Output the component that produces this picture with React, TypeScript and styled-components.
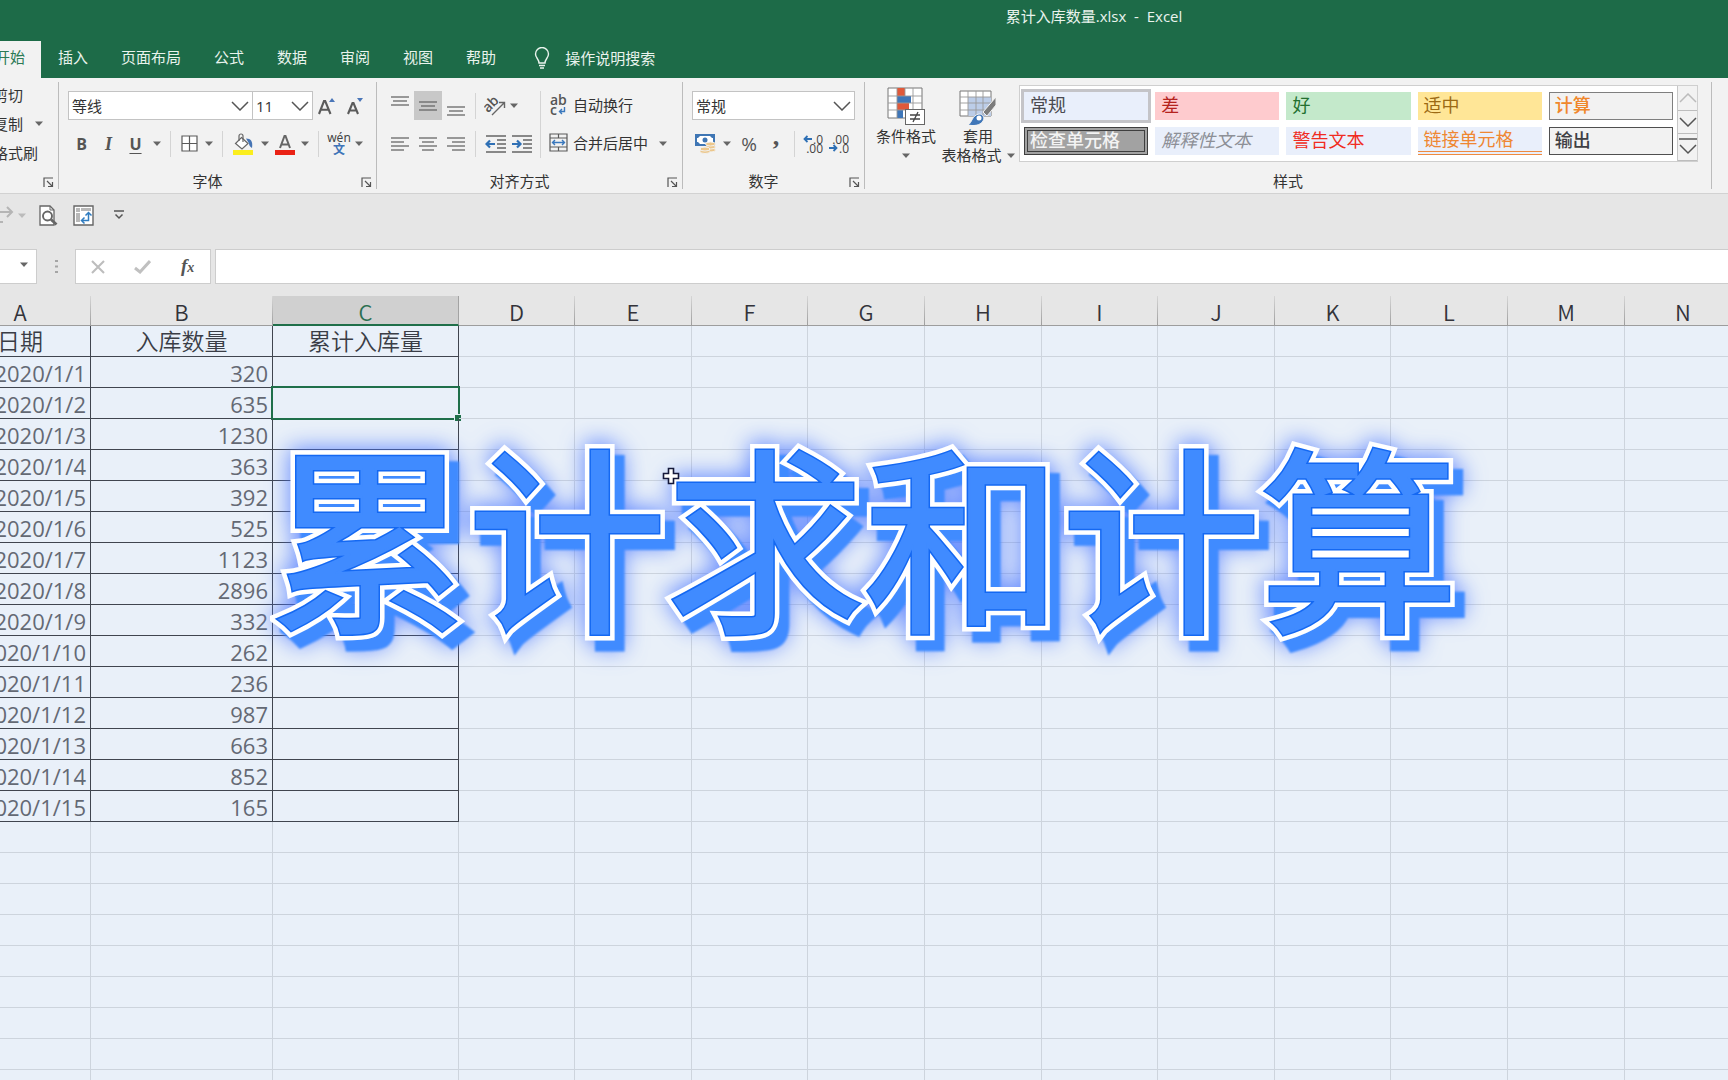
import React from "react";
import styled, { createGlobalStyle, css } from "styled-components";

const UI_FONT = `"Open Sans", "Noto Sans CJK SC", "Noto Sans", sans-serif`;

const GlobalStyle = createGlobalStyle`
  *, *::before, *::after { box-sizing: border-box; }
  html, body { margin: 0; padding: 0; }
  body { font-family: ${UI_FONT}; background: #e6e6e6; }
  button, input, select { font: inherit; color: inherit; margin: 0; }
`;

const Page = styled.div`
  position: relative;
  display: flex;
  flex-direction: column;
  height: 100vh;
  overflow: hidden;
  font-size: 15px;
  line-height: 20px;
  color: #333;
`;

/* ---------- title bar and tabs ---------- */

const TitleBar = styled.header`
  background: #1d6b48;
  color: #e9f3ed;
  padding: 6px 0 15px 460px;
  text-align: center;
  white-space: pre;
`;

const TabBar = styled.nav`
  display: flex;
  gap: 1px;
  height: 37px;
  padding-right: 16px;
  background: #1d6b48;
  color: #e9f3ed;
`;

const Tab = styled.button<{ $active?: boolean }>`
  flex: none;
  padding: 0 16px 6px;
  border: 0;
  background: ${(p) => (p.$active ? "#f2f2f2" : "transparent")};
  color: ${(p) => (p.$active ? "#2c7a55" : "inherit")};
  ${(p) => p.$active && "margin-left: -21px;"}
`;

const TellMe = styled.button`
  display: flex;
  align-items: center;
  gap: 15px;
  padding: 0 16px 4px 21px;
  border: 0;
  background: transparent;
`;

/* ---------- ribbon ---------- */

const Ribbon = styled.section`
  display: flex;
  flex: none;
  height: 116px;
  padding: 4px 16px 4px 0;
  background: #f2f2f2;
  border-bottom: 1px solid #d2d2d2;
`;

const Group = styled.div<{ $width?: number }>`
  display: flex;
  flex-direction: column;
  ${(p) => (p.$width ? `flex: none; width: ${p.$width}px;` : "flex: 1; min-width: 0;")}
  border-right: 1px solid #bcbcbc;
  overflow: hidden;
`;

const GroupBody = styled.div`
  display: flex;
  flex: 1;
  padding: 9px 0 0 9px;
`;

const Rows = styled.div`
  display: flex;
  flex-direction: column;
  gap: 9px;
`;

const Row = styled.div`
  display: flex;
  align-items: center;
  height: 29px;
`;

const GroupFooter = styled.div`
  display: flex;
  align-items: center;
  height: 20px;
  margin-bottom: -2px;
`;

const GroupName = styled.span`
  flex: 1;
  text-align: center;
`;

const Launcher = styled.button`
  display: flex;
  width: 15px;
  margin-left: 5px;
  padding: 2px 0 0;
  border: 0;
  background: transparent;
`;

const ClipList = styled.div`
  flex: 1;
  margin: -2px 0 0 -7px;
`;

const ClipItem = styled.button`
  display: flex;
  align-items: center;
  gap: 12px;
  height: 29px;
  padding: 0;
  border: 0;
  background: transparent;
  white-space: nowrap;
`;

const IconButton = styled.button<{ $w?: number; $on?: boolean }>`
  display: flex;
  flex: none;
  align-items: center;
  justify-content: center;
  width: ${(p) => p.$w ?? 27}px;
  height: 29px;
  padding: 0;
  border: 0;
  background: ${(p) => (p.$on ? "#c8c8c8" : "transparent")};
`;

const TextButton = styled.button`
  display: flex;
  align-items: center;
  height: 29px;
  padding: 0 0 2px;
  border: 0;
  background: transparent;
  white-space: nowrap;
`;

const IconSlot = styled.span`
  display: flex;
  width: 24px;
`;

const Divider = styled.span<{ $tall?: boolean }>`
  flex: none;
  width: 1px;
  height: ${(p) => (p.$tall ? 67 : 26)}px;
  margin: 0 ${(p) => (p.$tall ? 8 : 6)}px 0 5px;
  background: #d4d4d4;
`;

const Glyph = styled.span<{ $kind: "bold" | "italic" | "underline" | "percent" | "comma" }>`
  color: #555;
  font: 700 16px/20px "Open Sans", sans-serif;
  ${(p) => p.$kind === "italic" && css`font-family: "Liberation Serif", serif; font-style: italic; font-size: 18px;`}
  ${(p) => p.$kind === "underline" && css`text-decoration: underline; text-underline-offset: 3px;`}
  ${(p) => p.$kind === "percent" && css`font-weight: 500; font-size: 19px;`}
  ${(p) => p.$kind === "comma" && css`font: 700 26px/20px "Liberation Serif", serif; height: 34px;`}
`;

const Combo = styled.label<{ $width: number }>`
  position: relative;
  display: block;
  width: ${(p) => p.$width}px;
  height: 29px;
  margin-right: -1px;

  select {
    appearance: none;
    width: 100%;
    height: 100%;
    padding: 0 26px 0 3px;
    border: 1px solid #c3c3c3;
    border-radius: 0;
    background: #fff;
    line-height: 20px;
  }

  svg {
    position: absolute;
    right: 4px;
    top: 10px;
    pointer-events: none;
  }
`;

const BigButton = styled.button<{ $w: number }>`
  display: flex;
  flex: none;
  flex-direction: column;
  align-items: center;
  width: ${(p) => p.$w}px;
  padding: 0;
  border: 0;
  background: transparent;
  line-height: 19px;

  svg { flex: none; }
  > svg { margin: 2px 0; }
`;

const BigLabel = styled.span`
  display: flex;
  align-items: center;
  gap: 5px;
  height: 19px;
  white-space: nowrap;
`;

const StylesBody = styled.div`
  display: flex;
  flex: 1;
  padding: 3px 13px 0 10px;
`;

const Gallery = styled.div`
  display: flex;
  flex: 1;
  height: 77px;
  border: 1px solid #cfcfcf;
  background: #fff;
`;

const Swatches = styled.div`
  display: grid;
  flex: 1;
  grid-template-columns: repeat(5, 1fr);
  grid-auto-rows: 28px;
  gap: 7px;
  padding: 6px 4px 6px 4px;
`;

const Swatch = styled.button<{ $kind: string }>`
  min-width: 0;
  padding: 0 6px 3px;
  border: 0;
  background: #e9effb;
  color: #4a4a50;
  font-size: 18px;
  line-height: 24px;
  text-align: left;
  white-space: nowrap;
  ${(p) => p.$kind === "normal" && css`outline: 3px solid #c4c4c8;`}
  ${(p) => p.$kind === "bad" && css`background: #fecbce; color: #b5231e;`}
  ${(p) => p.$kind === "good" && css`background: #c4e9cb; color: #23702f;`}
  ${(p) => p.$kind === "neutral" && css`background: #ffe697; color: #9c6a14;`}
  ${(p) => p.$kind === "calc" && css`background: #f2f2f2; color: #f0872b; border: 1px solid #7f7f7f; padding: 0 5px 2px; font-weight: 500;`}
  ${(p) => p.$kind === "check" && css`background: #a2a2a2; color: #f3f3f3; border: 4px double #3f3f3f; padding: 0 2px 3px; font-weight: 500; line-height: 18px;`}
  ${(p) => p.$kind === "explain" && css`color: #8d9097; font-style: italic;`}
  ${(p) => p.$kind === "warn" && css`color: #f02b22;`}
  ${(p) => p.$kind === "link" && css`color: #ef8732; border-bottom: 4px double #ef8b40; padding-bottom: 0;`}
  ${(p) => p.$kind === "output" && css`background: #f2f2f2; color: #3f3f44; border: 1px solid #4f4f4f; padding: 0 5px 2px; font-weight: 500;`}
`;

const Scroller = styled.div`
  display: grid;
  grid-template-rows: 25px 23px 1fr;
  width: 20px;
  border-left: 1px solid #c6c6c6;
  background: #f2f2f2;
`;

const ScrollButton = styled.button`
  display: flex;
  align-items: center;
  justify-content: center;
  padding: 0;
  border: 0;
  border-bottom: 1px solid #bdbdbd;
  background: transparent;
`;

/* ---------- quick access and formula bar ---------- */

const QuickBar = styled.div`
  display: flex;
  flex: none;
  align-items: center;
  height: 55px;
  padding-bottom: 13px;
`;

const FormulaBar = styled.div`
  display: flex;
  flex: none;
  align-items: stretch;
  height: 35px;
  margin-bottom: 12px;
`;

const NameBox = styled.button`
  display: flex;
  align-items: center;
  justify-content: flex-end;
  width: 37px;
  padding: 0 8px 4px 0;
  border: 1px solid #cdcdcd;
  border-left: 0;
  background: #fff;
`;

const Grip = styled.span`
  display: flex;
  align-items: center;
  justify-content: center;
  width: 38px;
`;

const FormulaTools = styled.div`
  display: flex;
  align-items: center;
  justify-content: space-around;
  width: 136px;
  margin-right: 4px;
  border: 1px solid #cdcdcd;
  background: #fff;
`;

const Fx = styled.span`
  color: #555;
  font: italic 700 19px/20px "Liberation Serif", serif;
  small { font-size: 14px; }
`;

const FormulaInput = styled.input`
  flex: 1;
  min-width: 0;
  border: 1px solid #cdcdcd;
  border-right: 0;
  border-radius: 0;
  background: #fff;
  outline: 0;
`;

/* ---------- sheet ---------- */

const Sheet = styled.main`
  flex: 1;
  min-height: 0;
  overflow: hidden;
  background: #e9f0f9;
`;

const Grid = styled.table`
  width: max(1792px, calc(100% + 50px));
  margin-left: -50px;
  border-spacing: 0;
  table-layout: fixed;
  font-size: 22px;
  line-height: 28px;
`;

const HeadCell = styled.th<{ $on?: boolean }>`
  height: 30px;
  padding: 2px 0 1px;
  border-right: 1px solid;
  border-image: linear-gradient(#d8d8d8, #9c9c9c) 1;
  border-bottom: 1px solid #a3a7ad;
  background: #e6e6e6;
  color: #33333a;
  font-family: "Noto Sans CJK SC", sans-serif;
  font-weight: 350;
  line-height: 26px;
  ${(p) =>
    p.$on &&
    css`
      padding-bottom: 0;
      background: #d0d0d0;
      color: #2b6f50;
      border-image: none;
      border-right-color: #a3a3a3;
      border-bottom: 2px solid #1f6f4a;
    `}
`;

const Cell = styled.td<{ $framed?: boolean; $head?: boolean }>`
  position: relative;
  height: 31px;
  padding: ${(p) => (p.$head ? "0 0 1px" : "2px 4px 0 0")};
  border-right: 1px solid ${(p) => (p.$framed ? "#40454f" : "#cdd4dd")};
  border-bottom: 1px solid ${(p) => (p.$framed ? "#40454f" : "#cdd4dd")};
  color: ${(p) => (p.$head ? "#3a3d46" : "#646974")};
  font-size: ${(p) => (p.$head ? 23 : 22)}px;
  font-weight: ${(p) => (p.$head ? 350 : 400)};
  text-align: ${(p) => (p.$head ? "center" : "right")};
  white-space: nowrap;
`;

const Selection = styled.span`
  position: absolute;
  inset: -2px;
  border: 2px solid #1f6f4a;

  &::after {
    content: "";
    position: absolute;
    right: -4px;
    bottom: -4px;
    width: 8px;
    height: 8px;
    border: 1px solid #e9f0f9;
    background: #1f6f4a;
  }
`;

/* ---------- caption over the sheet ---------- */

const CaptionLayer = styled.div`
  position: absolute;
  inset: 0;
  display: flex;
  align-items: center;
  justify-content: center;
  padding-bottom: 19px;
  pointer-events: none;
`;

const Caption = styled.h1`
  position: relative;
  z-index: 0;
  margin: 0;
  color: #408bff;
  font-family: "Noto Sans CJK SC", sans-serif;
  font-size: 198px;
  font-weight: 400;
  line-height: 240px;
  white-space: nowrap;
  -webkit-text-stroke: 5px #1468f2;

  &::before,
  &::after {
    content: attr(data-text);
    position: absolute;
    inset: 0;
  }

  &::before {
    z-index: -1;
    color: #fff;
    -webkit-text-stroke: 14px #fff;
    filter: drop-shadow(10px 11px 1px #408bff) drop-shadow(-1px -2px 11px rgba(70, 115, 255, 0.8));
  }

  &::after {
    -webkit-text-stroke: 2px #408bff;
  }
`;

const Pointer = styled.svg`
  position: absolute;
  left: 662px;
  top: 467px;
`;

/* ---------- icons ---------- */

const Caret = ({ color = "#666" }: { color?: string }) => (
  <svg width="8" height="5" viewBox="0 0 8 5"><path d="M0 0.5h8L4 5z" fill={color} /></svg>
);

const Chevron = ({ up, color = "#555" }: { up?: boolean; color?: string }) => (
  <svg width="18" height="10" viewBox="0 0 18 10" fill="none" stroke={color} strokeWidth="1.5">
    <path d={up ? "M1 9l8-8 8 8" : "M1 1l8 8 8-8"} />
  </svg>
);

const LauncherIcon = () => (
  <svg width="11" height="11" viewBox="0 0 11 11" fill="none" stroke="#555" strokeWidth="1.2">
    <path d="M1 10V1h9M4 4l5 5M9.5 5v4.5H5" />
  </svg>
);

const Bulb = () => (
  <svg width="16" height="22" viewBox="0 0 16 22" fill="none" stroke="#e9f3ed" strokeWidth="1.4">
    <path d="M5 16c0-4-3.5-5-3.5-9a6.5 6.5 0 0 1 13 0c0 4-3.5 5-3.5 9zM5 18.5h6M6 21h4" />
  </svg>
);

const Lines = ({ rows }: { rows: [number, number, number][] }) => (
  <svg width="18" height="22" viewBox="0 0 18 22" stroke="#666" strokeWidth="1.3">
    {rows.map(([x1, x2, y], i) => <path key={i} d={`M${x1} ${y}H${x2}`} />)}
  </svg>
);

const GrowFont = ({ down }: { down?: boolean }) => (
  <svg width="20" height="22" viewBox="0 0 20 22">
    <path
      d={down ? "M3 19L7.5 8h1L13 19M4.8 15.5h6.4" : "M2 19L7 6h1.2L13.5 19M4 14.8h7.6"}
      fill="none" stroke="#5b5b5b" strokeWidth="2.1"
    />
    <path d={down ? "M12 3h6l-3 4z" : "M12 7h6l-3-4z"} fill="#4a76b8" />
  </svg>
);

const BordersIcon = () => (
  <svg width="17" height="17" viewBox="0 0 17 17" fill="#fff" stroke="#5a5a5a" strokeWidth="1.2">
    <path d="M1 1h15v15H1zM8.5 1v15M1 8.5h15" />
  </svg>
);

const FillIcon = () => (
  <svg width="22" height="22" viewBox="0 0 22 22">
    <path d="M9.5 4.5l6.500 6-6 5.500-6.500-5.500z" fill="#fff" stroke="#666" strokeWidth="1.2" />
    <path d="M7 8V3a2 2 0 0 1 4 0v6" fill="none" stroke="#666" strokeWidth="1.2" />
    <path d="M14 5.5c5 0 7 3 6 9.5-2-1-3-3-3-4.500z" fill="#4574b4" />
    <rect x="1" y="17" width="20" height="5" fill="#fbee1e" />
  </svg>
);

const FontColorIcon = () => (
  <svg width="22" height="22" viewBox="0 0 22 22">
    <path d="M6 15L10.5 3h1L16 15M7.5 11.5h7" fill="none" stroke="#666" strokeWidth="2" />
    <rect x="1" y="17" width="20" height="5" fill="#ea2215" />
  </svg>
);

const PhoneticStack = styled.span`
  display: flex;
  flex-direction: column;
  align-items: center;
  color: #444;
  font: 400 12px/10px "Noto Sans", sans-serif;
  b { color: #3f74b8; font: 700 12px/11px "Noto Sans CJK SC", sans-serif; }
`;

const OrientIcon = () => (
  <svg width="22" height="22" viewBox="0 0 22 22">
    <text x="0" y="15" transform="rotate(-45 6 12)" fontSize="14" fontWeight="600" fontFamily="Open Sans" fill="#555">ab</text>
    <path d="M8 20L20 8M15 7.5h5.5V13" fill="none" stroke="#666" strokeWidth="1.4" />
  </svg>
);

const IndentIcon = ({ right }: { right?: boolean }) => (
  <svg width="21" height="20" viewBox="0 0 21 20" fill="none">
    <path d="M1 2h20M12 6h9M12 10h9M12 14h9M1 18h20" stroke="#666" strokeWidth="1.3" />
    <path d={right ? "M1 10h8M6 6.5L9.5 10 6 13.5" : "M10 10H2M5 6.5L1.5 10 5 13.5"} stroke="#2f70b5" strokeWidth="2.2" />
  </svg>
);

const WrapMark = styled.span`
  display: flex;
  flex-direction: column;
  width: 20px;
  padding-left: 1px;
  color: #555;
  font: 600 14px/10px "Open Sans", sans-serif;
  text-align: left;

  span { display: flex; gap: 1px; }
  svg { margin-top: 2px; }
`;

const WrapIcon = () => (
  <WrapMark>
    <span>ab</span>
    <span>
      c
      <svg width="8" height="8" viewBox="0 0 8 8" fill="none" stroke="#3a78bd" strokeWidth="1.4">
        <path d="M6.5 0v4.5H1.5M4 2L1.5 4.5 4 7" />
      </svg>
    </span>
  </WrapMark>
);

const MergeIcon = () => (
  <svg width="19" height="19" viewBox="0 0 19 19" fill="none" stroke="#5a5a5a" strokeWidth="1.2">
    <path d="M1 1h17v17H1zM1 5h17M1 14h17M9.5 1v4M9.5 14v4" />
    <path d="M3.5 9.5h12M6 7L3.5 9.5 6 12M13 7l2.5 2.5L13 12" stroke="#3a78bd" strokeWidth="1.4" />
  </svg>
);

const CurrencyIcon = () => (
  <svg width="21" height="21" viewBox="0 0 21 21">
    <rect x="1" y="2" width="18" height="10" fill="#fff" stroke="#3f76b4" strokeWidth="2" />
    <path d="M1 1h4v2L3 5H1zM15 1h4v4h-2l-2-2zM1 9h2l2 2v2H1z" fill="#3f76b4" />
    <circle cx="10" cy="7" r="2.5" fill="#3f76b4" />
    <g fill="#ecc78c" stroke="#f2f2f2">
      <ellipse cx="15.5" cy="17" rx="5" ry="2" />
      <ellipse cx="15.5" cy="14" rx="5" ry="2" />
      <ellipse cx="15.5" cy="11" rx="5" ry="2" />
      <ellipse cx="10" cy="18.5" rx="5" ry="2" />
      <ellipse cx="10" cy="16" rx="5" ry="2" />
    </g>
  </svg>
);

const DecimalMark = styled.span`
  display: flex;
  flex-direction: column;
  width: 20px;
  color: #444;
  font: 400 12px/9px "Open Sans", sans-serif;

  span { display: flex; align-items: center; justify-content: flex-end; gap: 1px; height: 9px; }
`;

const DecimalIcon = ({ less }: { less?: boolean }) => {
  const arrow = (
    <svg width="9" height="8" viewBox="0 0 9 8" fill="none" stroke="#2f70b5" strokeWidth="1.8">
      <path d={less ? "M0 4h7M4.5 1l3 3-3 3" : "M9 4H2M4.5 1l-3 3 3 3"} />
    </svg>
  );
  return (
    <DecimalMark>
      <span>{!less && arrow}{less ? ".00" : ".0"}</span>
      <span>{less && arrow}{less ? ".0" : ".00"}</span>
    </DecimalMark>
  );
};

const ConditionalIcon = () => (
  <svg width="38" height="38" viewBox="0 0 38 38">
    <path d="M1 1h34v30H1z" fill="#fff" stroke="#777" />
    <rect x="10" y="1" width="8" height="8" fill="#e0593a" />
    <rect x="10" y="9" width="14" height="7" fill="#3f76b8" />
    <rect x="10" y="16" width="12" height="7" fill="#e0593a" />
    <rect x="10" y="23" width="6" height="8" fill="#3f76b8" />
    <path d="M10 1v30M18 1v8M26 1v22M1 9h34M1 16h34M1 23h34" fill="none" stroke="#999" strokeWidth="0.9" />
    <rect x="18.5" y="22.5" width="19" height="15" fill="#fff" stroke="#666" />
    <path d="M23 28h10M23 32h10M31 25l-5 10" stroke="#444" strokeWidth="1.3" />
  </svg>
);

const TableFormatIcon = () => (
  <svg width="38" height="38" viewBox="0 0 38 38">
    <path d="M1 4h31v25H1z" fill="#fff" stroke="#777" />
    <rect x="9" y="10" width="23" height="19" fill="#bccde8" />
    <path d="M9 4v25M17 4v25M24 4v25M1 10h31M1 16h31M1 23h31" stroke="#999" strokeWidth="0.9" />
    <path d="M37 10v8L28 29l-4-4z" fill="#7c7c7c" stroke="#f2f2f2" />
    <path d="M9 38c4-2 4-10 11-11 4 0 6 4 4 7-3 5-10 5-15 4z" fill="#3f76b8" stroke="#f2f2f2" />
    <circle cx="20" cy="31" r="2.5" fill="#fff" />
  </svg>
);

const RedoIcon = () => (
  <svg width="14" height="18" viewBox="0 0 14 18" fill="none" stroke="#b5b5b5" strokeWidth="2">
    <path d="M0 6h12M7 1l5 5-5 5M0 16h3" />
  </svg>
);

const PreviewIcon = () => (
  <svg width="19" height="21" viewBox="0 0 19 21" fill="none" stroke="#666">
    <path d="M1 1h10l4 4v15H1z" fill="#fff" strokeWidth="1.3" />
    <path d="M11 1v4h4" />
    <circle cx="8.5" cy="11" r="4.5" fill="#fff" strokeWidth="1.9" />
    <path d="M12 14.5l5.5 5" strokeWidth="2.8" />
  </svg>
);

const PivotIcon = () => (
  <svg width="21" height="21" viewBox="0 0 21 21" fill="none">
    <path d="M1 1h19v19H1z" fill="#fff" stroke="#666" strokeWidth="1.4" />
    <path d="M3 3h4v4H3zM8 3h10v3H8zM3 8h4v9H3z" fill="#b8b8b8" />
    <path d="M9 15.5h6.5V8M11.5 12.5l-3 3 3 3M12.5 10.5l3-3 3 3" stroke="#2f7cc0" strokeWidth="1.5" />
  </svg>
);

const CustomizeIcon = () => (
  <svg width="10" height="10" viewBox="0 0 10 10" fill="none" stroke="#555" strokeWidth="1.5">
    <path d="M0 1h10M1.5 4.5L5 8l3.5-3.5" />
  </svg>
);

const GripIcon = () => (
  <svg width="3" height="14" viewBox="0 0 3 14" fill="#a5a5a5">
    <path d="M0 0h3v2H0zM0 5.5h3v2H0zM0 11h3v2H0z" />
  </svg>
);

const CancelIcon = () => (
  <svg width="14" height="14" viewBox="0 0 14 14" stroke="#bdbdbd" strokeWidth="2.1"><path d="M1 1l12 12M13 1L1 13" /></svg>
);

const EnterIcon = () => (
  <svg width="17" height="14" viewBox="0 0 17 14" fill="none" stroke="#c0c0c0" strokeWidth="3"><path d="M1 8l5 4L16 1" /></svg>
);

/* ---------- data ---------- */

const tabs = ["开始", "插入", "页面布局", "公式", "数据", "审阅", "视图", "帮助"];

const swatches: [string, string][] = [
  ["常规", "normal"], ["差", "bad"], ["好", "good"], ["适中", "neutral"], ["计算", "calc"],
  ["检查单元格", "check"], ["解释性文本", "explain"], ["警告文本", "warn"], ["链接单元格", "link"], ["输出", "output"],
];

const columns: [string, number | undefined][] = [
  ["A", 141], ["B", 182], ["C", 186], ["D", 116], ["E", 117], ["F", 116], ["G", 117], ["H", 117],
  ["I", 116], ["J", 117], ["K", 116], ["L", 117], ["M", 117], ["N", undefined],
];

const spareColumns = columns.slice(3).map(([name]) => name);

const quantities = [320, 635, 1230, 363, 392, 525, 1123, 2896, 332, 262, 236, 987, 663, 852, 165];
const emptyRows = 9;
const caption = "累计求和计算";

export default function App() {
  return (
    <Page>
      <GlobalStyle />
      <TitleBar>累计入库数量.xlsx{"  -  "}Excel</TitleBar>
      <TabBar>
        {tabs.map((t, i) => <Tab key={t} $active={i === 0}>{t}</Tab>)}
        <TellMe><Bulb />操作说明搜索</TellMe>
      </TabBar>

      <Ribbon>
        <Group $width={59}>
          <ClipList>
            <ClipItem>剪切</ClipItem>
            <ClipItem>复制<Caret /></ClipItem>
            <ClipItem>格式刷</ClipItem>
          </ClipList>
          <GroupFooter>
            <GroupName />
            <Launcher aria-label="剪贴板"><LauncherIcon /></Launcher>
          </GroupFooter>
        </Group>

        <Group $width={318}>
          <GroupBody>
            <Rows>
              <Row>
                <Combo $width={185}>
                  <select aria-label="字体"><option>等线</option></select>
                  <Chevron />
                </Combo>
                <Combo $width={61}>
                  <select aria-label="字号"><option>11</option></select>
                  <Chevron />
                </Combo>
                <IconButton $w={29} aria-label="增大字号"><GrowFont /></IconButton>
                <IconButton $w={27} aria-label="减小字号"><GrowFont down /></IconButton>
              </Row>
              <Row>
                <IconButton><Glyph $kind="bold">B</Glyph></IconButton>
                <IconButton><Glyph $kind="italic">I</Glyph></IconButton>
                <IconButton><Glyph $kind="underline">U</Glyph></IconButton>
                <IconButton $w={16} aria-label="下划线"><Caret /></IconButton>
                <Divider />
                <IconButton $w={24} aria-label="边框"><BordersIcon /></IconButton>
                <IconButton $w={16} aria-label="边框选项"><Caret /></IconButton>
                <Divider />
                <IconButton $w={28} aria-label="填充颜色"><FillIcon /></IconButton>
                <IconButton $w={16} aria-label="填充选项"><Caret /></IconButton>
                <IconButton $w={24} aria-label="字体颜色"><FontColorIcon /></IconButton>
                <IconButton $w={16} aria-label="颜色选项"><Caret /></IconButton>
                <Divider />
                <IconButton $w={28}><PhoneticStack>wén<b>文</b></PhoneticStack></IconButton>
                <IconButton $w={12} aria-label="拼音选项"><Caret /></IconButton>
              </Row>
            </Rows>
          </GroupBody>
          <GroupFooter>
            <GroupName>字体</GroupName>
            <Launcher aria-label="字体设置"><LauncherIcon /></Launcher>
          </GroupFooter>
        </Group>

        <Group $width={306}>
          <GroupBody>
            <Rows>
              <Row>
                <IconButton $w={28} aria-label="顶端对齐"><Lines rows={[[0, 18, 2], [2, 16, 6], [0, 18, 10]]} /></IconButton>
                <IconButton $w={28} $on aria-label="垂直居中"><Lines rows={[[0, 18, 7], [2, 16, 11], [0, 18, 15]]} /></IconButton>
                <IconButton $w={28} aria-label="底端对齐"><Lines rows={[[0, 18, 12], [2, 16, 16], [0, 18, 20]]} /></IconButton>
                <Divider />
                <IconButton $w={26} aria-label="方向"><OrientIcon /></IconButton>
                <IconButton $w={12} aria-label="方向选项"><Caret /></IconButton>
              </Row>
              <Row>
                <IconButton $w={28} aria-label="左对齐"><Lines rows={[[0, 18, 5], [0, 13, 9], [0, 18, 13], [0, 13, 17]]} /></IconButton>
                <IconButton $w={28} aria-label="居中"><Lines rows={[[0, 18, 5], [3, 15, 9], [0, 18, 13], [3, 15, 17]]} /></IconButton>
                <IconButton $w={28} aria-label="右对齐"><Lines rows={[[0, 18, 5], [5, 18, 9], [0, 18, 13], [5, 18, 17]]} /></IconButton>
                <Divider />
                <IconButton $w={26} aria-label="减少缩进"><IndentIcon /></IconButton>
                <IconButton aria-label="增加缩进"><IndentIcon right /></IconButton>
              </Row>
            </Rows>
            <Divider $tall />
            <Rows>
              <Row><TextButton><IconSlot><WrapIcon /></IconSlot>自动换行</TextButton></Row>
              <Row>
                <TextButton><IconSlot><MergeIcon /></IconSlot>合并后居中</TextButton>
                <IconButton $w={29} aria-label="合并选项"><Caret /></IconButton>
              </Row>
            </Rows>
          </GroupBody>
          <GroupFooter>
            <GroupName>对齐方式</GroupName>
            <Launcher aria-label="对齐设置"><LauncherIcon /></Launcher>
          </GroupFooter>
        </Group>

        <Group $width={182}>
          <GroupBody>
            <Rows>
              <Row>
                <Combo $width={163}>
                  <select aria-label="数字格式"><option>常规</option></select>
                  <Chevron />
                </Combo>
              </Row>
              <Row>
                <IconButton aria-label="会计数字格式"><CurrencyIcon /></IconButton>
                <IconButton $w={16} aria-label="货币选项"><Caret /></IconButton>
                <IconButton $w={28}><Glyph $kind="percent">%</Glyph></IconButton>
                <IconButton $w={26}><Glyph $kind="comma">,</Glyph></IconButton>
                <Divider />
                <IconButton $w={24} aria-label="增加小数位数"><DecimalIcon /></IconButton>
                <IconButton $w={28} aria-label="减少小数位数"><DecimalIcon less /></IconButton>
              </Row>
            </Rows>
          </GroupBody>
          <GroupFooter>
            <GroupName>数字</GroupName>
            <Launcher aria-label="数字设置"><LauncherIcon /></Launcher>
          </GroupFooter>
        </Group>

        <Group>
          <StylesBody>
            <BigButton $w={62}>
              <ConditionalIcon />
              <BigLabel>条件格式</BigLabel>
              <BigLabel><Caret /></BigLabel>
            </BigButton>
            <BigButton $w={82}>
              <TableFormatIcon />
              <BigLabel>套用</BigLabel>
              <BigLabel>表格格式<Caret /></BigLabel>
            </BigButton>
            <Gallery>
              <Swatches>
                {swatches.map(([label, kind]) => <Swatch key={kind} $kind={kind}>{label}</Swatch>)}
              </Swatches>
              <Scroller>
                <ScrollButton aria-label="上一行"><Chevron up color="#bbb" /></ScrollButton>
                <ScrollButton aria-label="下一行"><Chevron /></ScrollButton>
                <ScrollButton aria-label="其他">
                  <svg width="18" height="18" viewBox="0 0 18 18" fill="none" stroke="#555" strokeWidth="1.5">
                    <path d="M0 1h18M1 7l8 8 8-8" />
                  </svg>
                </ScrollButton>
              </Scroller>
            </Gallery>
          </StylesBody>
          <GroupFooter><GroupName>样式</GroupName></GroupFooter>
        </Group>
      </Ribbon>

      <QuickBar>
        <IconButton $w={14} aria-label="恢复"><RedoIcon /></IconButton>
        <IconButton $w={16} aria-label="恢复选项"><Caret color="#bbb" /></IconButton>
        <IconButton $w={36} aria-label="打印预览"><PreviewIcon /></IconButton>
        <IconButton $w={34} aria-label="数据透视表"><PivotIcon /></IconButton>
        <IconButton $w={38} aria-label="自定义快速访问工具栏"><CustomizeIcon /></IconButton>
      </QuickBar>

      <FormulaBar>
        <NameBox aria-label="名称框"><Caret /></NameBox>
        <Grip><GripIcon /></Grip>
        <FormulaTools>
          <IconButton $w={40} aria-label="取消"><CancelIcon /></IconButton>
          <IconButton $w={40} aria-label="输入"><EnterIcon /></IconButton>
          <IconButton $w={40}><Fx>f<small>x</small></Fx></IconButton>
        </FormulaTools>
        <FormulaInput aria-label="编辑栏" />
      </FormulaBar>

      <Sheet>
        <Grid>
          <colgroup>
            {columns.map(([name, w]) => <col key={name} width={w} />)}
          </colgroup>
          <thead>
            <tr>{columns.map(([name]) => <HeadCell key={name} $on={name === "C"}>{name}</HeadCell>)}</tr>
          </thead>
          <tbody>
            <tr>
              <Cell $framed $head>日期</Cell>
              <Cell $framed $head>入库数量</Cell>
              <Cell $framed $head>累计入库量</Cell>
              {spareColumns.map((c) => <Cell key={c} />)}
            </tr>
            {quantities.map((q, i) => (
              <tr key={i}>
                <Cell $framed>{`2020/1/${i + 1}`}</Cell>
                <Cell $framed>{q}</Cell>
                <Cell $framed>{i === 1 && <Selection />}</Cell>
                {spareColumns.map((c) => <Cell key={c} />)}
              </tr>
            ))}
            {Array.from({ length: emptyRows }, (_, i) => (
              <tr key={i}>{columns.map(([name]) => <Cell key={name} />)}</tr>
            ))}
          </tbody>
        </Grid>
      </Sheet>

      <CaptionLayer>
        <Caption data-text={caption}>{caption}</Caption>
      </CaptionLayer>
      <Pointer width="19" height="19" viewBox="0 0 19 19">
        <path d="M6.5 1.5h5v5h5v5h-5v5h-5v-5h-5v-5h5z" fill="#fff" stroke="#14183a" strokeWidth="1.6" />
      </Pointer>
    </Page>
  );
}
